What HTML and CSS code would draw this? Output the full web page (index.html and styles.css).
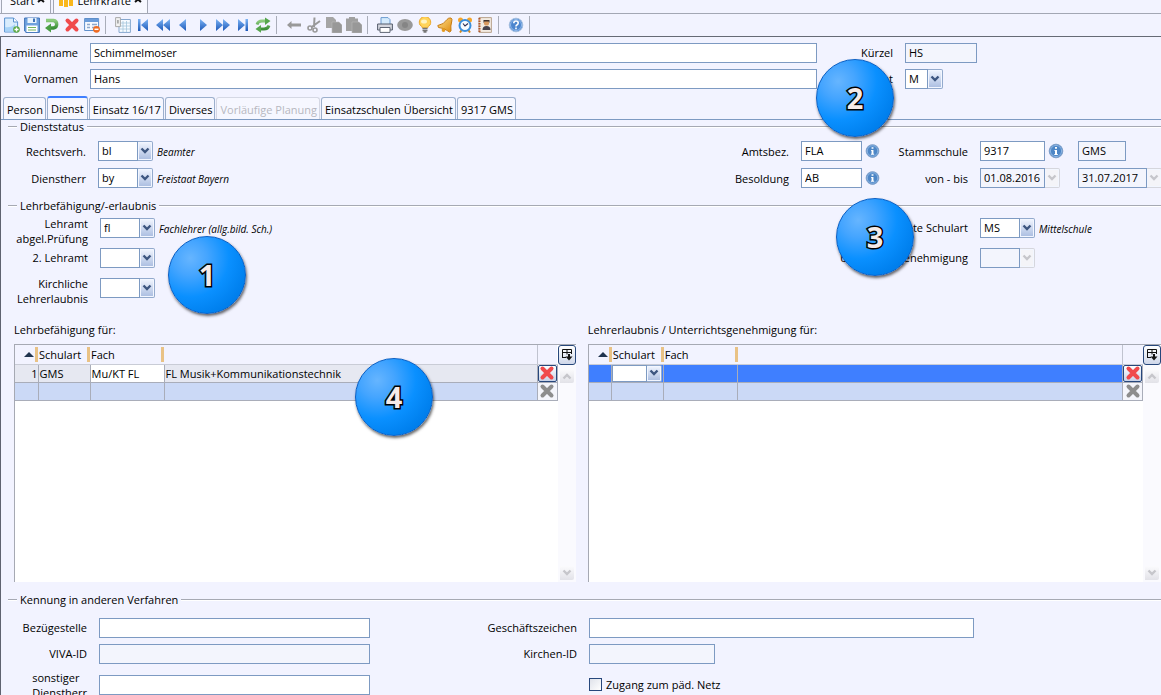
FILE: index.html
```html
<!DOCTYPE html>
<html lang="de">
<head>
<meta charset="utf-8">
<title>Lehrkräfte</title>
<link rel="stylesheet" href="styles.css">
</head>
<body>
<svg class="defs" aria-hidden="true">
  <defs>
    <linearGradient id="blue" x1="0" y1="0" x2="0" y2="1"><stop offset="0" stop-color="#7db4f5"/><stop offset="1" stop-color="#1c58b8"/></linearGradient>
    <linearGradient id="green" x1="0" y1="0" x2="0" y2="1"><stop offset="0" stop-color="#8ccb7c"/><stop offset="1" stop-color="#3c8f38"/></linearGradient>
    <linearGradient id="gold" x1="0" y1="0" x2="1" y2="1"><stop offset="0" stop-color="#ffe08a"/><stop offset="1" stop-color="#dd8a10"/></linearGradient>
  </defs>
  <symbol id="chevron" viewBox="0 0 10 8"><path d="M1.500 1.500 5 5 8.500 1.500" fill="none" stroke="currentColor" stroke-width="2.400"/></symbol>
  <symbol id="cross" viewBox="0 0 16 16"><path d="M3.500 3.500 12.500 12.500M12.500 3.500 3.500 12.500" fill="none" stroke="currentColor" stroke-width="4" stroke-linecap="round"/></symbol>
  <symbol id="info" viewBox="0 0 16 16"><circle cx="8" cy="8" r="6.800" fill="#4d86c6" stroke="#7f9fc8"/><circle cx="8" cy="8" r="5.600" fill="none" stroke="#9cc0ea" stroke-width=".8"/><path d="M7 4h2v1.700H7zM6.500 7H9v4h.8v1H6.300v-1H7V8h-.5z" fill="#fff"/></symbol>
  <symbol id="columns" viewBox="0 0 12 14"><path d="M1.500 10V1.500h9V6M1.500 4.500h9M6 1.500v5M1.500 9.500H5" fill="none" stroke="#111"/><path d="M4.500 8.500h7L8 12.500z" fill="#111"/><path d="M8 6v3" stroke="#111" stroke-width="2"/></symbol>
</svg>

<nav class="windows">
  <a class="window-tab" href="#">Start <svg viewBox="0 0 8 8"><path d="M1 1l6 5M7 1 1 6" stroke="#111" stroke-width="2"/></svg></a>
  <a class="window-tab" href="#"><svg class="people" viewBox="0 0 16 16"><g fill="#f9b71c"><circle cx="3" cy="5" r="2"/><circle cx="8" cy="4" r="2.200"/><circle cx="13" cy="5" r="2"/><path d="M1 7h4v7H1zM6 7h4v8H6zM11 7h4v7h-4z"/></g></svg> Lehrkräfte <svg viewBox="0 0 8 8"><path d="M1 1l6 5M7 1 1 6" stroke="#111" stroke-width="2"/></svg></a>
</nav>

<div class="toolbar" role="toolbar">
  <button aria-label="Neu"><svg viewBox="0 0 16 16"><path d="M.6 1h9l4 4v10H.6z" fill="#d9ecfd" stroke="#5b92cf"/><path d="M9.500 1v4h4" fill="#fff" stroke="#5b92cf"/><path d="M1 10q6 1 10-3v7.500H1z" fill="#a8d3f8"/><circle cx="12.500" cy="12.500" r="3.300" fill="#5ba843"/><path d="M12.500 10.500v4M10.500 12.500h4" stroke="#fff" stroke-width="1.300"/></svg></button>
  <button aria-label="Speichern"><svg viewBox="0 0 16 16"><path d="M.6 1h14.800v14.400H2L.6 14z" fill="#6fa1de" stroke="#3f72b8"/><path d="M3.500 1h9v5h-9z" fill="#e9f3fd"/><path d="M9 1.500h2v3.500H9z" fill="#3f72b8"/><path d="M2.500 8.500h11V15h-11z" fill="#fff"/><path d="M4 10.500h8M4 13h8" stroke="#74b45e" stroke-width="1.200"/></svg></button>
  <button aria-label="Rückgängig"><svg viewBox="0 0 16 16"><path d="M2 3.500h7.500a3.800 3.800 0 0 1 0 7.500H6" fill="none" stroke="url(#green)" stroke-width="3.400"/><path d="M7 6.500v9L1 11z" fill="#4b9e45"/></svg></button>
  <button class="red" aria-label="Löschen"><svg><use href="#cross"/></svg></button>
  <button aria-label="Formular leeren"><svg viewBox="0 0 16 16"><path d="M.6 1.500h14v12H.6z" fill="#f5f9ff" stroke="#5f8fca"/><path d="M.6 2h14v3H.6z" fill="#6b9cda"/><path d="M3 7.500h3M8 7.500h5M3 10.500h3M8 10.500h3" stroke="#8fa9cc" stroke-width="1.300"/><circle cx="12.500" cy="12.300" r="3.400" fill="#ef6a20"/><path d="M10.500 12.300h4" stroke="#fff" stroke-width="1.500"/></svg></button>
  <span class="sep"></span>
  <button aria-label="Tabelle"><svg viewBox="0 0 16 16"><path d="M4 2.500h11.400v12.900H4z" fill="#f7fbff" stroke="#86a7ce"/><path d="M5 6h10M5 9h10M5 12h10M8 4v11M11.500 4v11" stroke="#a4c6dc" stroke-width=".8"/><path d="M.6.6h4.800v9H.6z" fill="#f2f2f2" stroke="#aaa"/><path d="M2 3h1.800v3.500H2z" fill="#aaa"/></svg></button>
  <button aria-label="Erster"><svg viewBox="0 0 16 16"><path d="M3 2h2.500v12H3zM13 2v12L6 8z" fill="url(#blue)"/></svg></button>
  <button aria-label="Zurückblättern"><svg viewBox="0 0 16 16"><path d="M8 2v12L1 8zM15 2v12L8 8z" fill="url(#blue)"/></svg></button>
  <button aria-label="Vorheriger"><svg viewBox="0 0 16 16"><path d="M11 2v12L4 8z" fill="url(#blue)"/></svg></button>
  <button aria-label="Nächster"><svg viewBox="0 0 16 16"><path d="M5 2v12L12 8z" fill="url(#blue)"/></svg></button>
  <button aria-label="Vorblättern"><svg viewBox="0 0 16 16"><path d="M1 2v12L8 8zM8 2v12L15 8z" fill="url(#blue)"/></svg></button>
  <button aria-label="Letzter"><svg viewBox="0 0 16 16"><path d="M10.500 2H13v12h-2.500zM3 2v12l7-6z" fill="url(#blue)"/></svg></button>
  <button aria-label="Aktualisieren"><svg viewBox="0 0 16 16"><path d="M2 7.500Q3 4 7 4h4M14 8.500Q13 12 9 12H5" fill="none" stroke="url(#green)" stroke-width="2.800"/><path d="M10 .5 15.500 4 10 8zM6 8 .5 12 6 15.800z" fill="#56a64d"/></svg></button>
  <span class="sep"></span>
  <button aria-label="Zurück" disabled><svg viewBox="0 0 16 16"><path d="M1 8l4.500-4v2.500H15v3H5.500V12z" fill="#999"/></svg></button>
  <button aria-label="Ausschneiden" disabled><svg viewBox="0 0 16 16"><path d="M8.500.5 8 10M14 4 5 10.500" stroke="#999" stroke-width="2"/><circle cx="4" cy="11" r="2" fill="none" stroke="#999" stroke-width="1.600"/><circle cx="9" cy="13" r="2" fill="none" stroke="#999" stroke-width="1.600"/></svg></button>
  <button aria-label="Kopieren" disabled><svg viewBox="0 0 16 16"><path d="M0 0h7l3 3v8H0z" fill="#a5a5a5"/><path d="M6 5h7l3 3v8H6z" fill="#989898" stroke="#b9b9b9" stroke-width=".6"/></svg></button>
  <button aria-label="Einfügen" disabled><svg viewBox="0 0 16 16"><path d="M0 1.500h3V0h6v1.500h3V14H0z" fill="#a0a0a0"/><path d="M6 5h7l3 3v8H6z" fill="#989898" stroke="#b9b9b9" stroke-width=".6"/></svg></button>
  <span class="sep"></span>
  <button aria-label="Drucken"><svg viewBox="0 0 16 16"><path d="M4 7V.6h7l2 2V7" fill="#d4eafc" stroke="#6b9bd0"/><path d="M.6 7h14.800v6H.6z" fill="#d4d6de" stroke="#555c6c"/><path d="M3 10.500h10v4.900H3z" fill="#fff" stroke="#5f6674"/></svg></button>
  <button aria-label="Ansicht" disabled><svg viewBox="0 0 16 16"><ellipse cx="8" cy="8" rx="7.800" ry="6" fill="#999"/><circle cx="8" cy="8" r="3" fill="#858585"/></svg></button>
  <button aria-label="Hinweis"><svg viewBox="0 0 16 16"><path d="M5.500 11Q5 9 3 8A5.700 5.700 0 1 1 13 8q-2 1-2.500 3z" fill="#ffd45a" stroke="#eba72a"/><ellipse cx="7" cy="4.500" rx="3" ry="2" fill="#fff4c2"/><path d="M5.500 11.500h5M5.500 13.500h5M6.500 15h3" stroke="#777" stroke-width="1.300"/></svg></button>
  <button aria-label="Erinnerung"><svg viewBox="0 0 16 16"><path d="M.8 8.500Q7 7.500 10 2.500 11.500.5 14 1q1.500 1 .8 3-1.500 5-.8 10l-1.500 1Q7 10.500 1.500 10.500z" fill="url(#gold)" stroke="#c77c12"/><circle cx="6.500" cy="13" r="1.900" fill="#e39b22"/></svg></button>
  <button aria-label="Wecker"><svg viewBox="0 0 16 16"><circle cx="3.500" cy="3" r="2.500" fill="#f4a52a"/><circle cx="12.500" cy="3" r="2.500" fill="#f4a52a"/><path d="m3 15.500 2-3m8 3-2-3" stroke="#d48b20" stroke-width="2"/><circle cx="8" cy="8.500" r="5.500" fill="#f8fcff" stroke="#3b8fdc" stroke-width="2"/><path d="M6 6.500 8 9l3-2.500" fill="none" stroke="#335" stroke-width="1.200"/></svg></button>
  <button aria-label="Adressbuch"><svg viewBox="0 0 16 16"><path d="M2 .6h12.400v14.800H2z" fill="#f2ebe2" stroke="#b9a48e"/><path d="M2.500 1v14.500" stroke="#b4552a" stroke-width="2" stroke-dasharray="1.500 1"/><circle cx="9.500" cy="6" r="2.600" fill="#d99a61"/><path d="M6.500 6V3h6v3l-1-1.500h-4z" fill="#40302a"/><path d="M5.500 13q0-4 4-4t4 4z" fill="#48424c"/></svg></button>
  <span class="sep"></span>
  <button aria-label="Hilfe"><svg viewBox="0 0 16 16"><circle cx="8" cy="8" r="6.800" fill="#4c86ce" stroke="#a5bfdf"/><circle cx="8" cy="8" r="5.500" fill="none" stroke="#a4c8f2" stroke-width=".8"/><path d="M5.800 6.200q0-2.200 2.200-2.200t2.200 2q0 1.300-1.300 1.900Q8 8.300 8 9.400M8 10.600v1.600" fill="none" stroke="#fff" stroke-width="1.600"/></svg></button>
  <span class="sep"></span>
</div>

<main>
  <div class="person">
    <label for="fam">Familienname</label><input id="fam" value="Schimmelmoser">
    <label for="krz">Kürzel</label><input id="krz" class="w72 readonly" value="HS" readonly>
    <label for="vor">Vornamen</label><input id="vor" value="Hans">
    <label for="sex">Geschlecht</label><span class="combo short"><select id="sex"><option>M</option></select><i><svg><use href="#chevron"/></svg></i></span>
  </div>

  <div class="tabs" role="tablist">
    <button role="tab">Person</button>
    <button role="tab" class="active" aria-selected="true">Dienst</button>
    <button role="tab">Einsatz 16/17</button>
    <button role="tab">Diverses</button>
    <button role="tab" disabled>Vorläufige Planung</button>
    <button role="tab">Einsatzschulen Übersicht</button>
    <button role="tab">9317 GMS</button>
  </div>

  <section>
    <h2>Dienststatus</h2>
    <div class="status">
      <label for="rv">Rechtsverh.</label>
      <div class="field"><span class="combo"><select id="rv"><option>bl</option></select><i><svg><use href="#chevron"/></svg></i></span><em>Beamter</em></div>
      <label for="amt">Amtsbez.</label>
      <div class="field"><input id="amt" class="w61" value="FLA"><svg class="info"><use href="#info"/></svg></div>
      <label for="stamm">Stammschule</label>
      <div class="field"><input id="stamm" class="w65" value="9317"><svg class="info"><use href="#info"/></svg><input class="w48 readonly second" aria-label="Schulart" value="GMS" readonly></div>
      <label for="dh">Dienstherr</label>
      <div class="field"><span class="combo"><select id="dh"><option>by</option></select><i><svg><use href="#chevron"/></svg></i></span><em>Freistaat Bayern</em></div>
      <label for="bes">Besoldung</label>
      <div class="field"><input id="bes" class="w61" value="AB"><svg class="info"><use href="#info"/></svg></div>
      <label for="von">von - bis</label>
      <div class="field"><span class="combo date off"><select id="von" disabled><option>01.08.2016</option></select><i><svg><use href="#chevron"/></svg></i></span><span class="combo date off until"><select aria-label="bis" disabled><option>31.07.2017</option></select><i><svg><use href="#chevron"/></svg></i></span></div>
    </div>
  </section>

  <section>
    <h2>Lehrbefähigung/-erlaubnis</h2>
    <div class="teaching">
      <label for="l1">Lehramt<br>abgel.Prüfung</label>
      <div class="field"><span class="combo"><select id="l1"><option>fl</option></select><i><svg><use href="#chevron"/></svg></i></span><em>Fachlehrer (allg.bild. Sch.)</em></div>
      <label class="single" for="art">Unterrichtete Schulart</label>
      <div class="field"><span class="combo"><select id="art"><option>MS</option></select><i><svg><use href="#chevron"/></svg></i></span><em>Mittelschule</em></div>
      <label class="single" for="l2">2. Lehramt</label>
      <div class="field"><span class="combo"><select id="l2"><option></option></select><i><svg><use href="#chevron"/></svg></i></span></div>
      <label class="single" for="gen">Unterrichtsgenehmigung</label>
      <div class="field"><span class="combo off"><select id="gen" disabled><option></option></select><i><svg><use href="#chevron"/></svg></i></span></div>
      <label for="l3">Kirchliche<br>Lehrerlaubnis</label>
      <div class="field"><span class="combo"><select id="l3"><option></option></select><i><svg><use href="#chevron"/></svg></i></span></div>
    </div>
  </section>

  <div class="lists">
    <div>
      <h3>Lehrbefähigung für:</h3>
      <div class="list">
        <table>
          <colgroup><col class="c-num"><col class="c-art"><col class="c-fach"><col><col class="c-del"></colgroup>
          <thead><tr><th class="sort"><b></b></th><th>Schulart</th><th>Fach</th><th class="last"></th><th class="none"></th></tr></thead>
          <tbody>
            <tr class="filled"><td class="num">1</td><td>GMS</td><td class="edit">Mu/KT FL</td><td>FL Musik+Kommunikationstechnik</td><td class="del"><button class="red current" aria-label="Zeile löschen"><svg><use href="#cross"/></svg></button></td></tr>
            <tr><td></td><td></td><td></td><td></td><td class="del"><button class="grey" aria-label="Zeile löschen"><svg><use href="#cross"/></svg></button></td></tr>
          </tbody>
        </table>
        <div class="side"><button class="pick" aria-label="Spalten wählen"><svg><use href="#columns"/></svg></button><div class="scroll"><i class="up"><svg><use href="#chevron"/></svg></i><i><svg><use href="#chevron"/></svg></i></div></div>
      </div>
    </div>
    <div>
      <h3>Lehrerlaubnis / Unterrichtsgenehmigung für:</h3>
      <div class="list">
        <table>
          <colgroup><col class="c-num"><col class="c-art"><col class="c-fach"><col><col class="c-del"></colgroup>
          <thead><tr><th class="sort"><b></b></th><th>Schulart</th><th>Fach</th><th class="last"></th><th class="none"></th></tr></thead>
          <tbody>
            <tr class="selected"><td></td><td class="cell-combo"><span class="combo"><select aria-label="Schulart"><option></option></select><i><svg><use href="#chevron"/></svg></i></span></td><td></td><td></td><td class="del"><button class="red current" aria-label="Zeile löschen"><svg><use href="#cross"/></svg></button></td></tr>
            <tr><td></td><td></td><td></td><td></td><td class="del"><button class="grey" aria-label="Zeile löschen"><svg><use href="#cross"/></svg></button></td></tr>
          </tbody>
        </table>
        <div class="side"><button class="pick" aria-label="Spalten wählen"><svg><use href="#columns"/></svg></button><div class="scroll"><i class="up"><svg><use href="#chevron"/></svg></i><i><svg><use href="#chevron"/></svg></i></div></div>
      </div>
    </div>
  </div>

  <section>
    <h2>Kennung in anderen Verfahren</h2>
    <div class="ids">
      <label for="bz">Bezügestelle</label><input id="bz">
      <label for="gz">Geschäftszeichen</label><input id="gz" class="w385">
      <label for="viva">VIVA-ID</label><input id="viva" class="readonly" readonly>
      <label for="kid">Kirchen-ID</label><input id="kid" class="w126 readonly" readonly>
      <label class="block" for="sd">sonstiger<br>Dienstherr</label><input id="sd">
      <label class="check"><input type="checkbox"> Zugang zum päd. Netz</label>
    </div>
  </section>
</main>

<div class="marker m1">1</div>
<div class="marker m2">2</div>
<div class="marker m3">3</div>
<div class="marker m4">4</div>
</body>
</html>
```
FILE: styles.css
```css
* { box-sizing: border-box; }

html, body { height: 100%; margin: 0; }

body {
  position: relative;
  display: flex;
  flex-direction: column;
  overflow: hidden;
  background: #f2f3ff;
  color: #000;
  font: 11px/15px "Open Sans", "Noto Sans", sans-serif;
}

.defs { position: absolute; width: 0; height: 0; }

button, input, select { font: inherit; color: inherit; margin: 0; }
button { padding: 0; border: 0; background: none; }

/* window tabs */
.windows {
  display: flex;
  flex: none;
  align-items: flex-end;
  gap: 2px;
  height: 14px;
  padding-left: 1px;
  overflow: hidden;
  border-bottom: 1px solid #a3a7b4;
}
.window-tab {
  display: flex;
  align-items: center;
  gap: 3px;
  height: 24px;
  padding: 0 5px 3px 8px;
  border: 1px solid #a3a7b4;
  border-bottom: 0;
  background: #f7f8ff;
  color: #000;
  text-decoration: none;
}
.window-tab + .window-tab { padding-left: 4px; }
.window-tab svg { width: 8px; height: 8px; }
.window-tab .people { width: 16px; height: 16px; }

/* toolbar */
.toolbar {
  display: flex;
  flex: none;
  align-items: center;
  height: 23px;
  padding-left: 2px;
  border-bottom: 1px solid #666a75;
}
.toolbar button { display: flex; justify-content: center; width: 20px; }
.toolbar svg { width: 16px; height: 16px; }
.sep { width: 1px; height: 18px; margin: 0 7px 0 3px; background: #a9adb9; }
.red { color: #f04a4c; }
.grey { color: #8d8d8d; }

main { flex: 1; border-left: 1px solid #5f6370; }

/* fields */
label { padding-bottom: 1px; text-align: right; }
input, select {
  width: 100%;
  height: 20px;
  padding: 0 3px 1px;
  border: 1px solid #7d9ac2;
  border-radius: 0;
  background: #fff;
  outline: 0;
}
.readonly { background: #f3f5fd; }
.w48 { width: 48px; }
.w61 { width: 61px; }
.w65 { width: 65px; }
.w72 { width: 72px; }
.w126 { width: 126px; }
.w385 { width: 385px; }
.field { display: flex; align-items: center; height: 20px; }
.info { width: 16px; height: 16px; margin-left: 3px; }
em { margin-left: 4px; font-size: 10px; white-space: nowrap; }
.field em { padding-top: 2px; }

.combo { display: flex; flex: none; width: 55px; height: 20px; }
.combo select { flex: 1; width: 0; appearance: none; opacity: 1; color: #000; }
.combo i, .scroll i {
  display: flex;
  align-items: center;
  justify-content: center;
  width: 15px;
  height: 20px;
  border: 1px solid #93aacd;
  border-left: 0;
  border-radius: 0 2px 2px 0;
  background: linear-gradient(#f2f6ff, #a9bce0);
  box-shadow: inset 0 0 0 1px #f2f6ff;
  color: #3d5680;
}
.combo svg, .scroll svg { width: 10px; height: 8px; }
.combo.short { width: 38px; }
.combo.date { width: 80px; }
.combo.off select { background: #f3f5fd; }
.combo.off i { border-color: #d5d6dd; background: #f4f4f8; color: #c6c6cb; }

.person {
  display: grid;
  grid-template-columns: 77px 1fr 64px 256px;
  gap: 6px 12px;
  align-items: center;
  padding-top: 6px;
}

/* page tabs */
.tabs {
  display: flex;
  align-items: flex-end;
  gap: 1px;
  height: 31px;
  padding-left: 2px;
  border-bottom: 1px solid #7d9ac2;
}
.tabs button {
  height: 22px;
  padding: 2px 2px 0 3px;
  border: 1px solid #9db0cd;
  border-bottom: 0;
  border-radius: 3px 3px 0 0;
  background: #f6f7ff;
  white-space: nowrap;
}
.tabs .active { height: 23px; padding: 0 3px 1px; border-top: 2px solid #3f7fff; }
.tabs button:disabled { border-color: #d5d8e4; color: #b6b7c0; }

/* sections */
h2, h3 { margin: 0; font: inherit; }
h2 {
  display: flex;
  align-items: center;
  gap: 3px;
  height: 13px;
  padding-left: 7px;
}
h2::before, h2::after { content: ""; width: 9px; height: 2px; background: linear-gradient(#a6a9b3 50%, #fff 50%); }
h2::after { flex: 1; }

.status {
  display: grid;
  grid-template-columns: 86px 1fr 60px 79px 76px 181px;
  gap: 7px 12px;
  align-items: center;
  margin-left: -1px;
  padding: 8px 0 11px;
}
.status label { padding-bottom: 0; }
.second { margin-left: 14px; }
.until { margin-left: 18px; }
.combo.date.until { width: 84px; }

.teaching {
  display: grid;
  grid-template-columns: 87px 1fr 180px 181px;
  grid-auto-rows: 30px;
  gap: 0 12px;
  padding: 6px 0 14px;
}
.teaching label { margin-top: -2px; }
.teaching .single { padding-top: 4px; }

/* lists */
.lists {
  display: grid;
  grid-template-columns: 495fr 505fr;
  gap: 12px;
  padding: 0 0 11px 13px;
}
h3 { height: 22px; }
.list {
  display: flex;
  height: 238px;
  border: 1px solid #a6a9b3;
  border-width: 1px 0 0 1px;
  background: #fff;
}
table { flex: 1; align-self: flex-start; border-collapse: collapse; table-layout: fixed; width: 0; }
.c-num { width: 23px; }
.c-art { width: 52px; }
.c-fach { width: 74px; }
.c-del { width: 20px; }
th {
  height: 19px;
  padding: 0 0 0 1px;
  background: linear-gradient(to right, transparent 0 calc(100% - 3px), #e9c285 0) 0 2px / 100% 15px no-repeat #f2f3ff;
  border-bottom: 1px solid #c9ccd6;
  font-weight: 400;
  text-align: left;
}
th.last { background: #f2f3ff; }
th.none { border-left: 1px solid #c0c3cf; background: #f2f3ff; }
.sort b {
  display: block;
  width: 0;
  margin-left: 8px;
  border: 5px solid transparent;
  border-top: 0;
  border-bottom: 5px solid #20344f;
}
td {
  height: 18px;
  padding: 0 0 0 1px;
  border: 1px solid #a9adb9;
  border-left: 0;
  background: #cbd9f6;
  line-height: 15px;
  white-space: nowrap;
}
.filled td { background: #e6e8f1; }
.filled .edit { background: #fff; }
.num { text-align: right; }
.selected td { background: #3f7fff; }
.del, .filled .del, .selected .del { padding: 0; background: #f4f5fb; }
.del button { display: flex; align-items: center; justify-content: center; width: 100%; height: 17px; }
.del svg { width: 16px; height: 16px; }
.current { border: 1px solid #27477c; border-radius: 2px; background: linear-gradient(#fff, #c8d2e8); }
.del .current { border: 1px solid #27477c; }
.cell-combo { padding: 0; }
.cell-combo .combo { width: 50px; height: 17px; }
.cell-combo select, .cell-combo .combo i { height: 17px; }

.side { display: flex; flex-direction: column; width: 18px; }
.pick {
  display: flex;
  align-items: center;
  justify-content: center;
  height: 20px;
  border: 1px solid #27477c;
  border-radius: 3px;
  background: linear-gradient(#fff, #cfd7ea);
}
.pick svg { width: 12px; height: 14px; }
.scroll {
  display: flex;
  flex: 1;
  flex-direction: column;
  justify-content: space-between;
  align-items: center;
  padding: 4px 0 2px;
  background: #fafafe;
}
.scroll i { width: 14px; height: 14px; border: 0; background: linear-gradient(#fbfbfd, #e2e2e8); box-shadow: none; color: #c6c6cb; }
.scroll .up svg { transform: rotate(180deg); }

/* identifiers */
.ids {
  display: grid;
  grid-template-columns: 86px 271px 195px 1fr;
  gap: 6px 12px;
  align-items: center;
  padding-top: 12px;
}
.ids .block { justify-self: end; padding: 0; text-align: left; }
.ids .check { grid-column: 4; display: flex; align-items: center; gap: 4px; }
.check input { appearance: none; width: 13px; height: 13px; padding: 0; border-color: #27477c; background: linear-gradient(135deg, #dfe2ea, #fff); }

/* numbered markers */
.marker {
  position: absolute;
  display: flex;
  align-items: center;
  justify-content: center;
  width: 78px;
  height: 78px;
  padding-bottom: 1px;
  border: 1px solid #0a5fc4;
  border-radius: 50%;
  background: radial-gradient(circle at 28% 28%, #66b5ff 0, #45a5ff 22%, #0a90ff 50%, #0080ee 75%, #0070dc 100%);
  box-shadow: 1px 2px 3px rgba(0, 0, 0, .6);
  color: #f6ebe8;
  font-size: 29px;
  font-weight: 700;
  -webkit-text-stroke: 3px #000;
  paint-order: stroke fill;
}
.m1 { left: 168px; top: 236px; }
.m2 { right: 267px; top: 59px; }
.m3 { right: 247px; top: 198px; }
.m4 { left: 355px; top: 358px; }
```
